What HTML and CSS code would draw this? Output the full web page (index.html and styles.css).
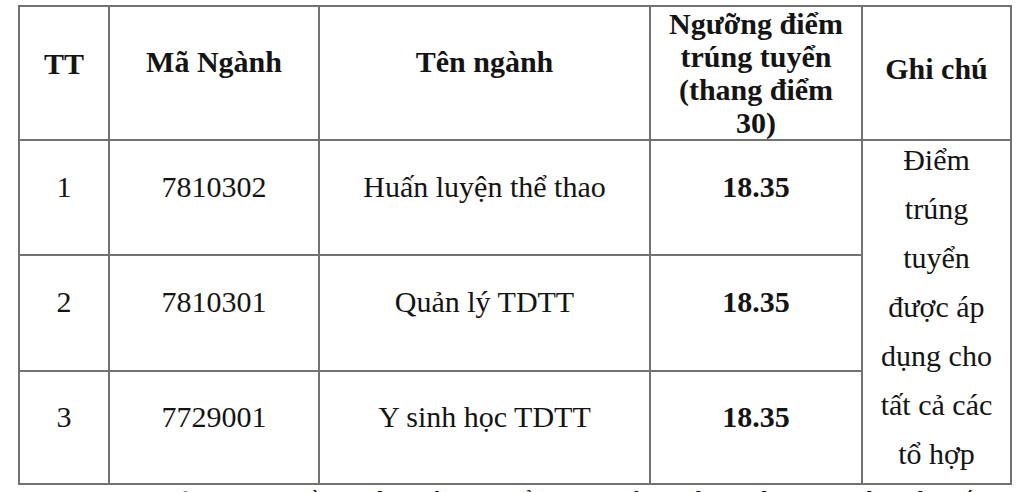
FILE: index.html
```html
<!DOCTYPE html>
<html lang="vi">
<head>
<meta charset="utf-8">
<title>Ngưỡng điểm trúng tuyển</title>
<link rel="stylesheet" href="styles.css">
</head>
<body>
<div class="page">
  <table class="score-table">
    <colgroup>
      <col class="c-tt">
      <col class="c-ma">
      <col class="c-ten">
      <col class="c-diem">
      <col class="c-ghi">
    </colgroup>
    <thead>
      <tr class="head-row">
        <th class="th-tt">TT</th>
        <th class="th-name">Mã Ngành</th>
        <th class="th-name">Tên ngành</th>
        <th class="th-multi">Ngưỡng điểm<br>trúng tuyển<br>(thang điểm<br>30)</th>
        <th class="th-note">Ghi chú</th>
      </tr>
    </thead>
    <tbody>
      <tr class="row-1">
        <td>1</td>
        <td>7810302</td>
        <td>Huấn luyện thể thao</td>
        <td class="score">18.35</td>
        <td class="note" rowspan="3"><div class="note-text">Điểm<br>trúng<br>tuyển<br>được áp<br>dụng cho<br>tất cả các<br>tổ hợp</div></td>
      </tr>
      <tr class="row-2">
        <td>2</td>
        <td>7810301</td>
        <td>Quản lý TDTT</td>
        <td class="score">18.35</td>
      </tr>
      <tr class="row-3">
        <td>3</td>
        <td>7729001</td>
        <td>Y sinh học TDTT</td>
        <td class="score">18.35</td>
      </tr>
    </tbody>
  </table>
  <p class="after">a. Thí sinh đủ điều kiện trúng tuyển phải xác nhận nhập học trên hệ thống</p>
</div>
</body>
</html>
```

FILE: styles.css
```css
html, body {
  margin: 0;
  padding: 0;
  background: #ffffff;
}

body {
  width: 1020px;
  height: 492px;
  overflow: hidden;
  font-family: "Liberation Serif", "Times New Roman", serif;
  color: #141414;
}

.page {
  padding: 5px 0 0 18px;
}

.score-table {
  border-collapse: collapse;
  table-layout: fixed;
  width: 992px;
  font-size: 30px;
}

.c-tt { width: 90px; }
.c-ma { width: 210px; }
.c-ten { width: 331px; }
.c-diem { width: 212px; }
.c-ghi { width: 149px; }

.score-table th,
.score-table td {
  border: 2px solid #727272;
  text-align: center;
  vertical-align: middle;
  padding: 0;
}

.head-row { height: 133px; }
.row-1 { height: 115px; }
.row-2 { height: 116px; }
.row-3 { height: 113px; }

.score-table th {
  font-weight: bold;
  line-height: 33px;
}

.score-table th.th-tt {
  padding-bottom: 20px;
}

.score-table th.th-name {
  padding-bottom: 24px;
}

.score-table th.th-note {
  padding-bottom: 10px;
}

.score-table td {
  line-height: 34px;
  padding-bottom: 22px;
}

.score-table td.score {
  font-weight: bold;
}

.score-table td.note {
  vertical-align: top;
  padding: 0;
  line-height: 49px;
}

.note-text {
  margin-top: -6px;
}

.after {
  margin: 0;
  padding-left: 100px;
  font-size: 30px;
  line-height: 34px;
  white-space: nowrap;
}
```
